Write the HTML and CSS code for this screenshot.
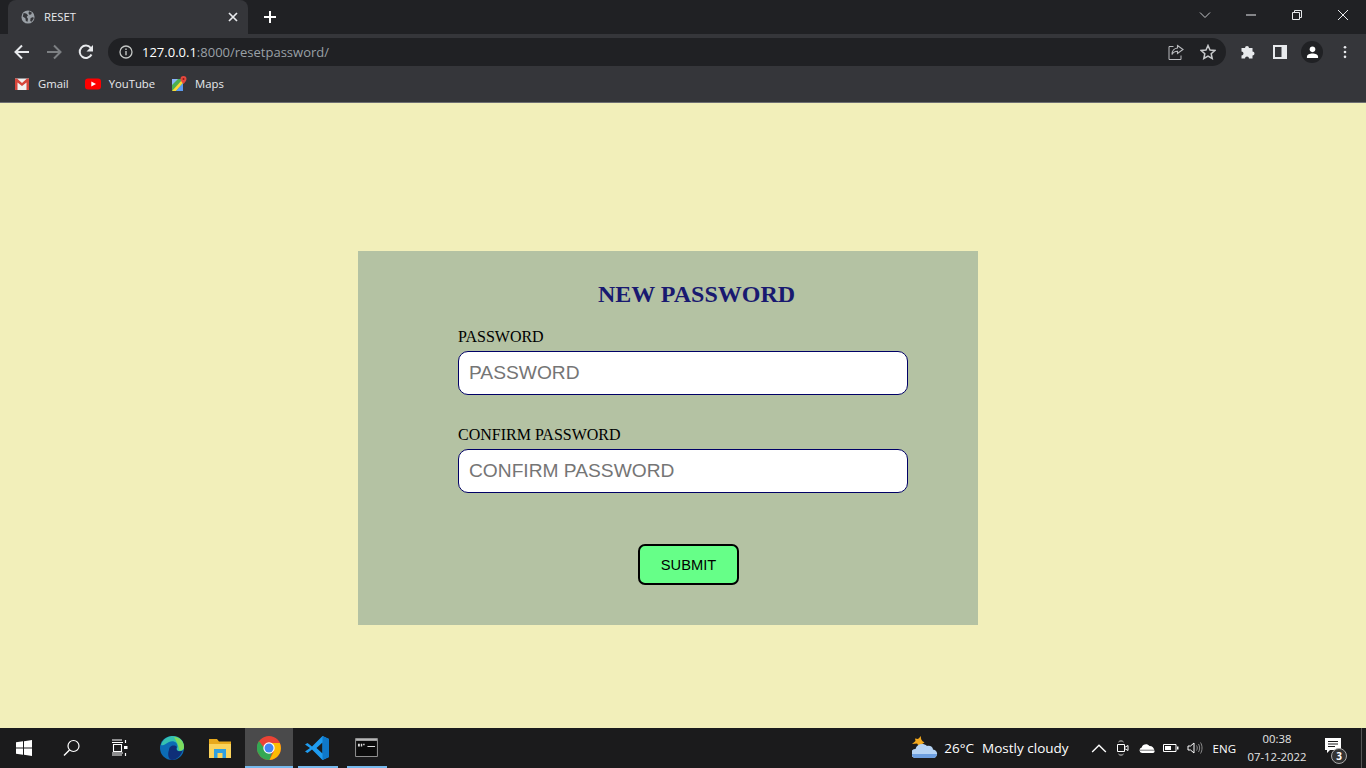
FILE: index.html
```html
<!DOCTYPE html>
<html lang="en">
<head>
<meta charset="utf-8">
<title>RESET</title>
<link rel="stylesheet" href="styles.css">
</head>
<body>
<header class="chrome">
  <div class="tabstrip">
    <div class="tab">
      <svg class="ic14" viewBox="0 0 16 16"><circle cx="8" cy="8" r="7.5" fill="#9aa0a6"/><path d="M3 3.500l3 .5 2 2-1.500 2 1.500 2-.5 3.500-2-1-.5-3-3-2zM9.500 1.500l3 1.500-1 2-2 .5-1-2zM11 9l3-1 .5 2-2.500 3.500-1.500-1z" fill="#35363a"/></svg>
      <span class="tabtitle">RESET</span>
      <svg class="tabclose" viewBox="0 0 10 10"><path d="M1 1l8 8M9 1l-8 8" stroke="#e8eaed" stroke-width="1.700"/></svg>
    </div>
    <svg class="newtab" viewBox="0 0 12 12"><path d="M6 0v12M0 6h12" stroke="#fff" stroke-width="2"/></svg>
    <div class="winctl">
      <svg class="wbtn chev" viewBox="0 0 12 12"><path d="M1 3.500l5 5 5-5" fill="none" stroke="#c4c6c9" stroke-width="1"/></svg>
      <svg class="wbtn" viewBox="0 0 12 12"><path d="M1 6h10" stroke="#e8eaed" stroke-width="1"/></svg>
      <svg class="wbtn" viewBox="0 0 12 12"><path d="M1.500 3.500h7v7h-7zM3.500 3.500v-2h7v7h-2" fill="none" stroke="#e8eaed" stroke-width="1"/></svg>
      <svg class="wbtn" viewBox="0 0 12 12"><path d="M1 1l10 10M11 1l-10 10" stroke="#e8eaed" stroke-width="1"/></svg>
    </div>
  </div>
  <div class="toolbar">
    <svg class="nav" viewBox="0 0 16 16"><path d="M15 8H2M8 1.500L1.500 8 8 14.500" fill="none" stroke="#e8eaed" stroke-width="2"/></svg>
    <svg class="nav" viewBox="0 0 16 16"><path d="M1 8h13M8 1.500L14.500 8 8 14.500" fill="none" stroke="#7d8083" stroke-width="2"/></svg>
    <svg class="nav" viewBox="0 0 16 16"><path d="M13.500 10.500A6.200 6.200 0 1 1 12.700 3.800" fill="none" stroke="#e8eaed" stroke-width="2"/><path d="M15 1v6.500H8.500z" fill="#e8eaed"/></svg>
    <div class="omnibox">
      <svg class="ic14" viewBox="0 0 14 14"><circle cx="7" cy="7" r="6" fill="none" stroke="#c4c7c5" stroke-width="1.300"/><path d="M7 6v4.200M7 3.600v1.400" stroke="#c4c7c5" stroke-width="1.400"/></svg>
      <span class="url"><b>127.0.0.1</b>:8000/resetpassword/</span>
      <svg class="omni-share" viewBox="0 0 16 16"><path d="M5.500 2.500H1v13h12v-4" fill="none" stroke="#b9bbbe" stroke-width="1"/><path d="M9.500 1.500l5.500 4-5.500 4V7.200C7 7.200 5 8.300 4 10.500 4 6.800 6.500 4.300 9.500 4z" fill="none" stroke="#b9bbbe" stroke-width="1.100"/></svg>
      <svg class="omni-star" viewBox="0 0 16 16"><path d="M8 1.500l2 4.500 4.800.5-3.600 3.200 1 4.800L8 12l-4.200 2.500 1-4.800L1.200 6.500 6 6z" fill="none" stroke="#c8cacc" stroke-width="1.500"/></svg>
    </div>
    <div class="tools">
      <svg class="ic16" viewBox="0 0 16 16"><path d="M1 5h3.500a2 2 0 1 1 4 0H12v3.500a2 2 0 1 1 0 4V15.500H8.500a2 2 0 1 0-4 0H1v-3a2 2 0 1 0 0-4z" fill="#e8eaed" transform="translate(.5 -1)"/></svg>
      <svg class="ic14" viewBox="0 0 14 14"><path d="M0 0h14v14H0zM2 2v10h6.500V2z" fill="#e8eaed" fill-rule="evenodd"/></svg>
      <span class="avatar"><svg viewBox="0 0 14 14"><circle cx="7" cy="3.600" r="3" fill="#fff"/><path d="M1 13v-1.500C1 9 4 8 7 8s6 1 6 3.500V13z" fill="#fff"/></svg></span>
      <svg class="dots" viewBox="0 0 4 16"><circle cx="2" cy="2.500" r="1.500" fill="#e8eaed"/><circle cx="2" cy="8" r="1.500" fill="#e8eaed"/><circle cx="2" cy="13.500" r="1.500" fill="#e8eaed"/></svg>
    </div>
  </div>
  <div class="bookmarks">
    <span class="bm"><svg class="ic16" viewBox="0 0 16 16"><path d="M1 2.500h14v11.500H1z" fill="#f1f1f1"/><path d="M1 2.500h2L8 7l5-4.500h2V14h-2.500V6.500L8 10 3.500 6.500V14H1z" fill="#d6453b"/></svg>Gmail</span>
    <span class="bm"><svg class="ic16" viewBox="0 0 16 16"><rect y="2.500" width="16" height="11" rx="3" fill="#f00"/><path d="M6.300 5.500L11 8l-4.700 2.500z" fill="#fff"/></svg>YouTube</span>
    <span class="bm"><svg class="ic16" viewBox="0 0 16 16"><path d="M1 3h11v12H1z" fill="#4caf50"/><path d="M1 15L12 3v4L5 15z" fill="#fdd835"/><path d="M5 15l7-8v8z" fill="#5c9bf0"/><path d="M1 3h6L1 9z" fill="#8ab4f8"/><path d="M12.500 0a3 3 0 0 1 3 3c0 2-3 5-3 5s-3-3-3-5a3 3 0 0 1 3-3z" fill="#e5483d"/><circle cx="12.500" cy="3" r="1" fill="#8e1d16"/></svg>Maps</span>
  </div>
</header>

<main class="page">
  <form class="card">
    <h2 class="card-title">NEW PASSWORD</h2>
    <label class="field">
      <span class="field-label">PASSWORD</span>
      <input class="field-input" type="password" placeholder="PASSWORD">
    </label>
    <label class="field">
      <span class="field-label">CONFIRM PASSWORD</span>
      <input class="field-input" type="password" placeholder="CONFIRM PASSWORD">
    </label>
    <div class="actions"><button class="submit" type="button">SUBMIT</button></div>
  </form>
</main>

<footer class="taskbar">
  <div class="tb-left">
    <span class="tb-item"><svg class="ic16" viewBox="0 0 16 16"><path d="M0 2.300l7-1v6.300H0zM8 1.200L16 0v7.600H8zM0 8.500h7v6.300l-7-1zM8 8.500h8V16l-8-1.200z" fill="#fff"/></svg></span>
    <span class="tb-item"><svg class="ic18" viewBox="0 0 18 18"><circle cx="10.500" cy="7" r="5.500" fill="none" stroke="#fff" stroke-width="1.200"/><path d="M6.500 11L1 16.500" stroke="#fff" stroke-width="1.500"/></svg></span>
    <span class="tb-item tb-gap"><svg class="ic18" viewBox="0 0 18 18"><path d="M1 1h10M1 16h10M2.500 5.500h8v7h-8z M1 14h11M1 3.500h11" fill="none" stroke="#fff" stroke-width="1.100"/><path d="M14.500 1v3M14.500 14v3" stroke="#fff" stroke-width="1.200"/><path d="M13 7h3.500v3H13z" fill="#fff"/></svg></span>
    <span class="tb-item"><svg class="ic24" viewBox="0 0 24 24"><circle cx="12" cy="12" r="12" fill="#0c6cb5"/><path d="M1 9C3 2 9 0 13 0c6 0 11 4 11 11 0 4-4 5-6 4-2-.8-1-3-.5-4C18 6 13 4 9 6 5 8 4 10 1 9z" fill="#35c1b0"/><path d="M14 1c5 0 10 4 10 10 0 3-3 4-5 3.500 0-3-1-6.500-5-13.500z" fill="#7ddc5e"/><path d="M9 14c0-4 5-6 8-3-1 1-1 3 1 4 2 .5 3.500 0 4.500-.5C21 20 16 24 12 24 9 24 7 19 9 14z" fill="#0f2f78"/></svg></span>
    <span class="tb-item"><svg class="ic24" viewBox="0 0 24 24"><path d="M1 3h8l2 2.500h12V21H1z" fill="#e8a91c"/><path d="M1 8h22v14H1z" fill="#fbd35b"/><path d="M6 13h12v9h-3.500v-5h-5v5H6z" fill="#2f9fe0"/></svg></span>
    <span class="tb-item tb-active"><svg class="ic24" viewBox="0 0 24 24"><circle cx="12" cy="12" r="12" fill="#ea4335"/><path d="M12 12L1.600 18A12 12 0 0 1 2 5l5 7z" fill="#34a853"/><path d="M1.600 18L7 10l5 2 4 2-3.500 10A12 12 0 0 1 1.600 18z" fill="#34a853"/><path d="M12 7h10.800A12 12 0 0 1 12.500 24L17 15z" fill="#fbbc04"/><circle cx="12" cy="12" r="5.700" fill="#fff"/><circle cx="12" cy="12" r="4.500" fill="#4285f4"/></svg></span>
    <span class="tb-item tb-open"><svg class="ic24" viewBox="0 0 24 24"><path d="M17.500 0L24 3v18l-6.500 3L7 13.500 2.500 17 0 15.500 5 12 0 8.500 2.500 7 7 10.500zM17.500 6.500L11.500 12l6 5.500z" fill="#1f9cf0"/><path d="M17.500 0L24 3v18l-6.500 3z" fill="#0f78c9"/></svg></span>
    <span class="tb-item tb-open tb-cmd"><svg class="cmd-icon" viewBox="0 0 24 20"><path d="M.5.500h23v19H.5z" fill="#0c0c0c" stroke="#9a9a9a" stroke-width="1"/><path d="M1 1h22v2H1z" fill="#b8b8b8"/><path d="M3 6h2v3H3zM6 6h1.500v3H6zM8.500 6H10v1.500H8.500zM13 8.500h8v1h-8z" fill="#ddd"/></svg></span>
  </div>
  <div class="tb-right">
    <svg class="weather" viewBox="0 0 26 26"><path d="M9 1c-.5 3 .5 5 3.500 6.500L7 11 5 8.500 0 9l3.500-3L3 3.500l3 .5z" fill="#f2a81e"/><path d="M3 23a4.500 4.500 0 0 1 .5-9C5 9 11 7.500 15 11c3-1 6 1 6 3.500 3 .5 4.500 2.500 4 5-.5 2.500-2 3.500-4 3.500z" fill="#b5d3f4"/><path d="M3 23a4 4 0 0 1-3-4h25c-.3 2.500-2 4-4 4z" fill="#6d9fe0"/></svg>
    <span class="temp">26°C</span>
    <span class="cond">Mostly cloudy</span>
    <svg class="tray" viewBox="0 0 14 14"><path d="M1 10.500l6-6 6 6" fill="none" stroke="#fff" stroke-width="1.200"/></svg>
    <svg class="tray" viewBox="0 0 16 16"><path d="M2.500 4.500h7v7h-7z" fill="none" stroke="#fff"/><path d="M9.500 7.500l3.500-2v5l-3.500-2z" fill="none" stroke="#fff"/><path d="M3.500 2c1-1.500 4-1.500 5 0M3.500 14c1 1.500 4 1.500 5 0" fill="none" stroke="#ccc"/></svg>
    <svg class="tray" viewBox="0 0 16 16"><path d="M3 13a2.800 2.800 0 0 1-.3-5.500C3.500 4.500 8 3 10.500 6 13 5.800 15 8 15.500 10.500 16 12 15 13 14 13z" fill="#fff"/><path d="M1 10.200h14.800" stroke="#1b1b1c" stroke-width=".6"/></svg>
    <svg class="tray" viewBox="0 0 16 16"><path d="M.500 4.500h12.500v7H.500z" fill="none" stroke="#fff"/><path d="M2 6h6v4H2zM14 6.500h1.500v3H14z" fill="#fff"/></svg>
    <svg class="tray" viewBox="0 0 16 16"><path d="M1 6h2.500L7 3v10L3.500 10H1z" fill="none" stroke="#fff"/><path d="M9.500 5.500c1 1.500 1 3.500 0 5M11.500 4c1.500 2.500 1.500 5.500 0 8M13.500 2.500c2 3 2 8 0 11" fill="none" stroke="#999" stroke-width=".9"/></svg>
    <span class="lang">ENG</span>
    <span class="clock"><span>00:38</span><span>07-12-2022</span></span>
    <span class="notif">
      <svg class="ic16" viewBox="0 0 16 16"><path d="M0 0h16v12H5l-3 3v-3H0z" fill="#fff"/><path d="M3 3.500h10M3 6h10M3 8.500h7" stroke="#1b1b1c"/></svg>
      <span class="notif-badge">3</span>
    </span>
    <span class="showdesk"></span>
  </div>
</footer>
</body>
</html>
```
FILE: styles.css
```css
* { box-sizing: border-box; }
html, body { height: 100%; margin: 0; }
body {
  width: 1366px;
  height: 768px;
  overflow: hidden;
  display: flex;
  flex-direction: column;
  background: #f2efba;
}
svg { display: block; flex: none; }
.ic14 { width: 14px; height: 14px; }
.ic16 { width: 16px; height: 16px; }
.ic18 { width: 18px; height: 18px; }
.ic24 { width: 24px; height: 24px; }

.chrome {
  flex: none;
  height: 103px;
  background: #35363a;
  border-bottom: 1px solid #6e6f72;
  font-family: "Open Sans", "Noto Sans", sans-serif;
  color: #e8eaed;
}
.tabstrip {
  height: 34px;
  background: #202124;
  display: flex;
  align-items: center;
  padding-left: 8px;
}
.tab {
  width: 240px;
  height: 34px;
  background: #35363a;
  border-radius: 8px 8px 0 0;
  display: flex;
  align-items: center;
  padding: 0 10px 0 13px;
}
.tabtitle {
  flex: 1;
  margin-left: 9px;
  padding-bottom: 2px;
  font-size: 11.3px;
}
.tabclose { width: 10px; height: 10px; }
.newtab { width: 12px; height: 12px; margin-left: 16px; }
.winctl {
  margin-left: auto;
  display: flex;
  align-items: center;
  padding-right: 17px;
  gap: 34px;
  margin-top: -5px;
}
.wbtn { width: 12px; height: 12px; }

.toolbar {
  height: 34px;
  display: flex;
  align-items: center;
  padding: 2px 0 0 14px;
}
.nav { width: 16px; height: 16px; margin-right: 16px; }
.nav:nth-child(3) { margin-right: 14px; }
.omnibox {
  width: 1118px;
  height: 28px;
  border-radius: 14px;
  background: #202124;
  display: flex;
  align-items: center;
  padding-left: 11px;
}
.url {
  margin-left: 9px;
  font-size: 13px;
  color: #9aa0a6;
  white-space: nowrap;
}
.url b { font-weight: 400; color: #fff; }
.omni-share { width: 16px; height: 16px; margin-left: auto; }
.omni-star { width: 16px; height: 16px; margin: 0 10px 0 16px; }
.tools {
  flex: 1;
  display: flex;
  align-items: center;
  padding-left: 14px;
}
.tools .ic14 { margin-left: 17px; }
.avatar {
  width: 22px;
  height: 22px;
  border-radius: 50%;
  background: #202124;
  margin-left: 14px;
  display: flex;
  align-items: center;
  justify-content: center;
}
.avatar svg { width: 13px; height: 13px; }
.dots { width: 4px; height: 14px; margin-left: 20px; }

.bookmarks {
  height: 34px;
  display: flex;
  align-items: center;
  padding: 0 0 3px 14px;
  font-size: 11.3px;
  gap: 16px;
}
.bm { display: flex; align-items: center; gap: 8px; }

.page {
  flex: 1;
  padding: 148px 0 0 358px;
}
.card {
  width: 620px;
  height: 374px;
  background: #b4c2a3;
  padding: 28px 70px 0 100px;
}
.card-title {
  margin: 0;
  padding-left: 27px;
  text-align: center;
  font: bold 24px/30px "Liberation Serif", serif;
  color: #191970;
}
.field {
  display: block;
  margin-top: 19px;
}
.field + .field { margin-top: 31px; }
.field-label {
  display: block;
  font: 16px/18px "Liberation Serif", serif;
  color: #000;
}
.field-input {
  display: block;
  width: 450px;
  height: 44px;
  margin: 5px 0 0;
  padding: 0 10px;
  border: 1px solid #000066;
  border-radius: 10px;
  background: #fff;
  font: 19.2px "Liberation Sans", sans-serif;
}
.field-input::placeholder { color: #757575; }
.actions {
  margin-top: 51px;
  padding-left: 180px;
}
.submit {
  display: block;
  width: 101px;
  height: 41px;
  padding: 0;
  border: 2px solid #000;
  border-radius: 7px;
  background: #66ff88;
  color: #000;
  font: 14.7px "Liberation Sans", sans-serif;
}

.taskbar {
  flex: none;
  height: 40px;
  background: #1b1b1c;
  display: flex;
  justify-content: space-between;
  font-family: "Open Sans", "Noto Sans", sans-serif;
  color: #fff;
}
.tb-left { display: flex; }
.tb-item {
  width: 48px;
  height: 40px;
  display: flex;
  align-items: center;
  justify-content: center;
  position: relative;
}
.tb-gap { margin-right: 4px; }
.tb-item:nth-child(5) { margin-right: 1px; }
.tb-active { background: #4a4a4b; }
.tb-active::after,
.tb-open::after {
  content: "";
  position: absolute;
  bottom: 0;
  left: 0;
  width: 48px;
  height: 2px;
  background: #76b9ed;
}
.tb-open::after { left: 5px; width: 40px; }
.tb-cmd { margin-left: 1px; }
.cmd-icon { width: 23px; height: 19px; margin-top: -2px; }
.tb-right { display: flex; align-items: center; }
.weather { width: 26px; height: 26px; margin-right: 6px; }
.temp { font-size: 13.5px; margin-right: 8px; }
.cond { font-size: 13.5px; margin-right: 22px; }
.tray { width: 16px; height: 16px; margin-right: 8px; }
.lang { font-size: 11.5px; margin-left: 2px; margin-right: 9px; }
.clock {
  width: 64px;
  display: flex;
  flex-direction: column;
  align-items: center;
  font-size: 11.3px;
  line-height: 18px;
  color: #e6e6e6;
}
.notif {
  position: relative;
  width: 48px;
  height: 40px;
  margin-right: 4px;
  display: flex;
  align-items: center;
  justify-content: center;
}
.notif svg { margin-top: -4px; }
.notif-badge {
  position: absolute;
  left: 22px;
  top: 20px;
  width: 16px;
  height: 16px;
  border-radius: 50%;
  border: 1px solid #aaa;
  background: #333;
  font-size: 10px;
  line-height: 14px;
  text-align: center;
  font-weight: 700;
}
.showdesk {
  width: 5px;
  height: 40px;
  border-left: 1px solid #555;
}
```
